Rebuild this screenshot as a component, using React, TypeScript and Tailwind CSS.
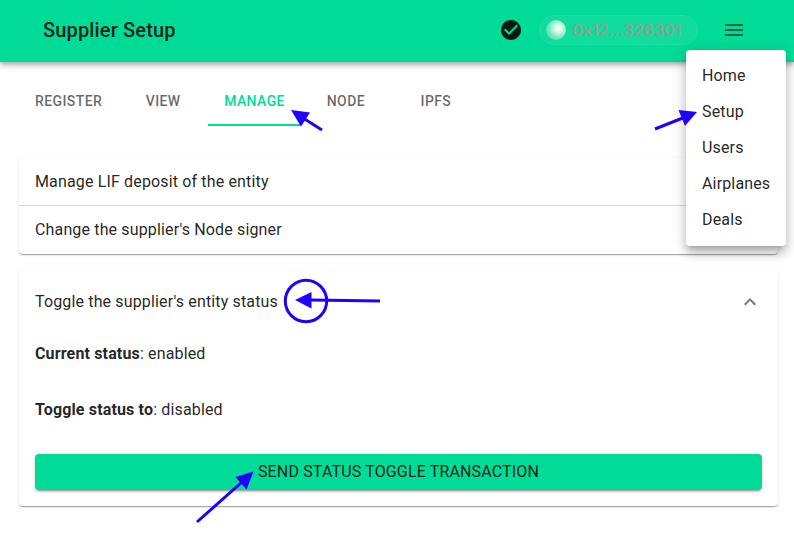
import React from 'react';

const paper =
  'bg-white shadow-[0px_2px_1px_-1px_rgba(0,0,0,0.2),0px_1px_1px_0px_rgba(0,0,0,0.14),0px_1px_3px_0px_rgba(0,0,0,0.12)]';

function Header() {
  return (
    <header className="relative flex h-[62px] items-center bg-[#00db97] pl-[43px] pr-[48px] pb-[2px] shadow-[0px_2px_4px_-1px_rgba(0,0,0,0.2),0px_4px_5px_0px_rgba(0,0,0,0.14),0px_1px_10px_0px_rgba(0,0,0,0.12)]">
      <h1 className="grow text-[20px] font-medium leading-8 tracking-[0.0075em]">Supplier Setup</h1>
      <svg className="mr-4 h-6 w-6" viewBox="0 0 24 24" fill="rgba(0,0,0,0.87)">
        <path d="M12 2C6.48 2 2 6.48 2 12s4.48 10 10 10 10-4.480 10-10S17.520 2 12 2zm-2 15l-5-5 1.410-1.410L10 14.170l7.590-7.590L19 8l-9 9z" />
      </svg>
      <div className="mr-6 flex h-[30px] w-[159px] shrink-0 items-center rounded-full border border-[#1fe0a4] bg-[#10dd9d] pl-[6px]">
        <span className="mr-[6px] h-5 w-5 rounded-full bg-[radial-gradient(circle_at_62%_42%,#ffffff_0%,#d5f8eb_22%,#7feac6_52%,#12dc9d_100%)]" />
        <span className="font-['Inter',sans-serif] text-[16px] font-semibold leading-5 tracking-normal text-[#8a9f97]">0x12...326301</span>
      </div>
      <svg className="h-6 w-6" viewBox="0 0 24 24" fill="rgba(0,0,0,0.54)">
        <path d="M3 18h18v-2H3v2zm0-5h18v-2H3v2zm0-7v2h18V6H3z" />
      </svg>
    </header>
  );
}

function Tab({ label, active }: { label: string; active?: boolean }) {
  return (
    <div
      className={`flex h-12 min-w-[90px] items-center justify-center border-b-2 px-4 pt-[1px] text-[14px] font-medium tracking-[0.02857em] ${
        active ? 'border-[#00db97] text-[#00db97]' : 'border-transparent text-black/60'
      }`}
    >
      {label}
    </div>
  );
}

function Menu() {
  return (
    <nav className="absolute left-[686px] top-[50px] h-[196px] w-[100px] rounded-[4px] bg-white py-2 shadow-[0px_5px_5px_-3px_rgba(0,0,0,0.2),0px_8px_10px_1px_rgba(0,0,0,0.14),0px_3px_14px_2px_rgba(0,0,0,0.12)]">
      {['Home', 'Setup', 'Users', 'Airplanes', 'Deals'].map((item) => (
        <div key={item} className="flex h-9 items-center px-4 leading-6">
          {item}
        </div>
      ))}
    </nav>
  );
}

function Annotations() {
  return (
    <svg className="pointer-events-none absolute left-0 top-0 h-[539px] w-[794px]" viewBox="0 0 794 539" fill="#2000ff" stroke="#2000ff">
      <g strokeWidth="3" fill="none">
        <path d="M322 130L303 118" />
        <path d="M655 129L684 117.500" />
        <path d="M380 301L311 300" />
        <path d="M197 522L242 482" />
        <circle cx="306" cy="301" r="20.700" />
      </g>
      <g stroke="none">
        <path d="M291 110L310 112.500L301 126.500Z" />
        <path d="M697 112L678.500 110L685 126Z" />
        <path d="M295 300L311.500 292V308.500Z" />
        <path d="M253.500 471.500L235.500 477L246.500 489.500Z" />
      </g>
    </svg>
  );
}

export default function App() {
  return (
    <div className="relative h-[539px] w-[794px] overflow-hidden bg-white font-['Roboto',sans-serif] text-[16px] tracking-[0.00938em] text-black/87">
      <Header />
      <div className="flex pl-[19px] pt-4">
        <Tab label="REGISTER" />
        <Tab label="VIEW" />
        <Tab label="MANAGE" active />
        <Tab label="NODE" />
        <Tab label="IPFS" />
      </div>
      <main className="flex flex-col gap-4 pl-[19px] pr-4 pt-8">
        <section className={`${paper} rounded-[4px]`}>
          <div className="flex h-[47px] items-center px-4 pt-px">Manage LIF deposit of the entity</div>
          <div className="flex h-[49px] items-center border-t border-black/15 px-4">Change the supplier's Node signer</div>
        </section>
        <section className={`${paper} h-[236px] rounded-[4px] px-4`}>
          <div className="flex h-16 items-center justify-between">
            <span>Toggle the supplier's entity status</span>
            <svg className="h-6 w-6" viewBox="0 0 24 24" fill="rgba(0,0,0,0.54)">
              <path d="M12 8l-6 6 1.410 1.410L12 10.830l4.590 4.580L18 14z" />
            </svg>
          </div>
          <p className="mt-2 leading-6"><b>Current status</b>: enabled</p>
          <p className="mt-8 leading-6"><b>Toggle status to</b>: disabled</p>
          <button className="mt-8 flex h-9 w-full items-center justify-center rounded-[4px] bg-[#00db97] shadow-[0px_3px_1px_-2px_rgba(0,0,0,0.2),0px_2px_2px_0px_rgba(0,0,0,0.14),0px_1px_5px_0px_rgba(0,0,0,0.12)]">
            SEND STATUS TOGGLE TRANSACTION
          </button>
        </section>
      </main>
      <Menu />
      <Annotations />
    </div>
  );
}
